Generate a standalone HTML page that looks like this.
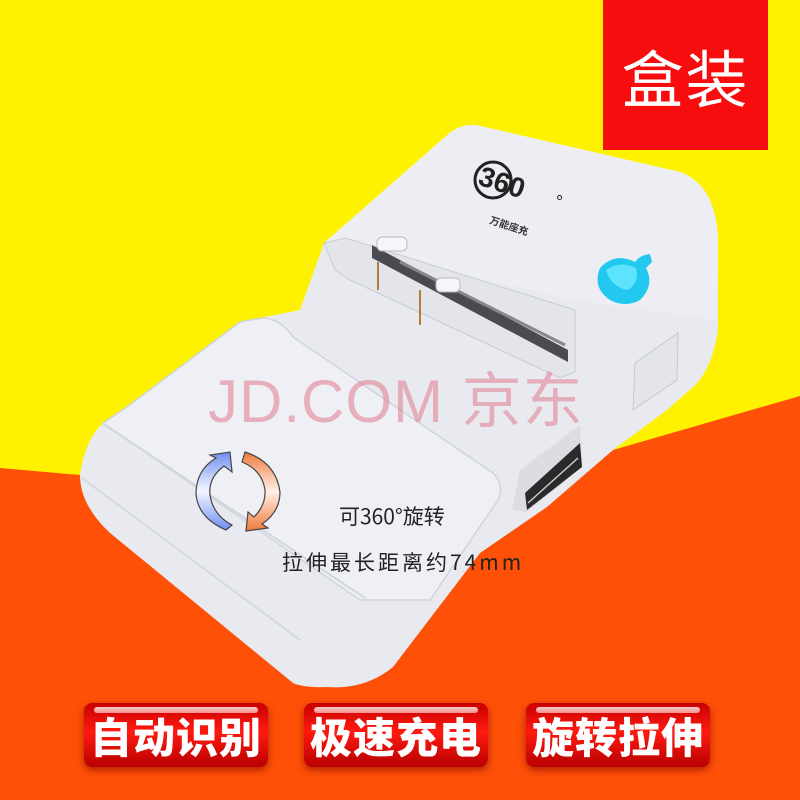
<!DOCTYPE html>
<html><head><meta charset="utf-8"><style>
body{margin:0;width:800px;height:800px;overflow:hidden;position:relative;background:#fff200;font-family:"Liberation Sans","Noto Sans CJK SC",sans-serif}
svg{position:absolute;left:0;top:0}
.box{position:absolute;left:603px;top:0;width:165px;height:150px;background:#f70d0d;color:#fff;font-size:62px;display:flex;align-items:center;justify-content:center;letter-spacing:2px;font-family:"Noto Sans CJK SC",sans-serif}
.btn{position:absolute;top:703px;width:184px;height:64px;border-radius:8px;background:linear-gradient(#c80000,#ff1a10 45%,#b80000);box-shadow:0 3px 8px rgba(120,0,0,.6);color:#fff;font-weight:900;font-size:42px;text-align:center;line-height:66px;letter-spacing:1px;font-family:"Noto Sans CJK SC",sans-serif}
.btn:before{content:"";position:absolute;left:10px;right:10px;top:4px;height:6px;border-radius:3px;background:linear-gradient(#fff,#ffb0b0);opacity:.8}
.t{position:absolute;color:#222;font-size:21px;font-family:"Noto Sans CJK SC",sans-serif;white-space:nowrap;line-height:1}
.wm{position:absolute;left:208px;top:372px;font-size:60px;color:rgba(225,120,140,.55);letter-spacing:1px;white-space:nowrap;line-height:1}
</style></head><body>
<svg width="800" height="800">
<polygon points="0,468 250,490 613,450 800,396 800,800 0,800" fill="#ff5008"/>
<path d="M445,137 Q458,124 476,125 L680,172 Q716,185 718,240 L718,330 Q712,370 693,387 L667,410 L613,450 L547,507 L480,553 L393,667 Q365,690 327,687 Q305,688 293,683 L110,533 Q80,505 80,475 Q85,440 103,423 L127,407 L240,322 L260,318 L300,310 L324,243 Z" fill="#e8eaf0"/>
<path d="M445,137 Q458,124 476,125 L680,172 Q716,185 718,240 L716,320 L575,300 L324,243 Z" fill="#eceef3"/>
<path d="M240,322 L262,318 Q280,318 293,337 L493,473 Q505,485 498,500 L430,600 L360,600 L103,423 L127,407 Z" fill="#eef0f5" stroke="#d0d3db" stroke-width="1.5"/>
<path d="M82,478 L300,640" stroke="#d5d8df" stroke-width="2" fill="none"/>
<path d="M102,423 L365,598" stroke="#d2d5dc" stroke-width="2" fill="none"/>
<path d="M324,243 L346,238 L575,310 L575,372 L560,378 L350,280 L335,270 Z" fill="#e3e5eb" stroke="#c8cbd3"/>
<path d="M372,245 L568,350 L568,362 L372,258 Z" fill="#4a4b50"/>
<path d="M400,262 L565,345" stroke="#888" stroke-width="3"/>
<rect x="377" y="237" width="30" height="14" rx="5" fill="#f5f6f9" stroke="#bbb"/>
<rect x="436" y="278" width="24" height="14" rx="5" fill="#f5f6f9" stroke="#bbb"/>
<line x1="378" y1="262" x2="378" y2="290" stroke="#b08030" stroke-width="2"/>
<line x1="420" y1="290" x2="420" y2="325" stroke="#b08030" stroke-width="2"/>
<path d="M600,268 Q615,252 635,262 Q640,255 650,254 L652,262 Q648,266 646,268 Q655,285 640,300 Q625,308 610,300 Q592,288 600,268Z" fill="#22c8ef"/>
<path d="M606,270 Q620,260 636,268 Q640,282 628,290 Q612,288 606,270Z" fill="#5ee3ff"/>
<circle cx="493" cy="180" r="18" fill="none" stroke="#222" stroke-width="3"/>
<text x="478" y="193" font-size="28" font-weight="bold" fill="#222" font-family="Liberation Sans" transform="rotate(18 505 185)">360</text>
<text x="556" y="208" font-size="18" fill="#222" font-family="Liberation Sans">°</text>
<text x="490" y="228" font-size="10" fill="#333" font-weight="bold" font-family="Noto Sans CJK SC" transform="rotate(18 505 222)">万能座充</text>
<polygon points="635,363 678,333 677,380 633,410" fill="#e3e5ea" stroke="#c5c8d0"/>
<polygon points="520,470 580,425 582,467 527,512 512,510" fill="#dcdde3"/>
<polygon points="525,493 580,443 582,467 527,510" fill="#2a2a2a"/>
<line x1="528" y1="503" x2="578" y2="458" stroke="#ccc" stroke-width="1.5"/>
<defs>
<linearGradient id="b" x1="0" y1="0" x2="0" y2="1"><stop offset="0" stop-color="#6f8ef0"/><stop offset=".5" stop-color="#f4f6ff"/><stop offset="1" stop-color="#6f8ef0"/></linearGradient>
<linearGradient id="o" x1="0" y1="0" x2="0" y2="1"><stop offset="0" stop-color="#ef7a3a"/><stop offset=".5" stop-color="#fff0e6"/><stop offset="1" stop-color="#ef7a3a"/></linearGradient>
</defs>
<path d="M230,452 L232,472 L224,466 Q208,478 210,495 Q213,515 232,525 L226,530 Q198,518 196,494 Q196,470 216,458 L210,455 Z" fill="url(#b)" stroke="#444" stroke-width="1.2"/>
<path d="M245,452 Q276,462 280,492 Q280,512 262,524 L268,528 L246,531 L248,512 L254,517 Q266,505 265,490 Q262,470 242,462 Z" fill="url(#o)" stroke="#444" stroke-width="1.2"/>
</svg>
<div class="wm">JD.COM 京东</div>
<div class="t" style="left:339px;top:506px">可360°旋转</div>
<div class="t" style="left:282px;top:552px;letter-spacing:3px">拉伸最长距离约74mm</div>
<div class="box">盒装</div>
<div class="btn" style="left:84px">自动识别</div>
<div class="btn" style="left:304px">极速充电</div>
<div class="btn" style="left:526px">旋转拉伸</div>
</body></html>
